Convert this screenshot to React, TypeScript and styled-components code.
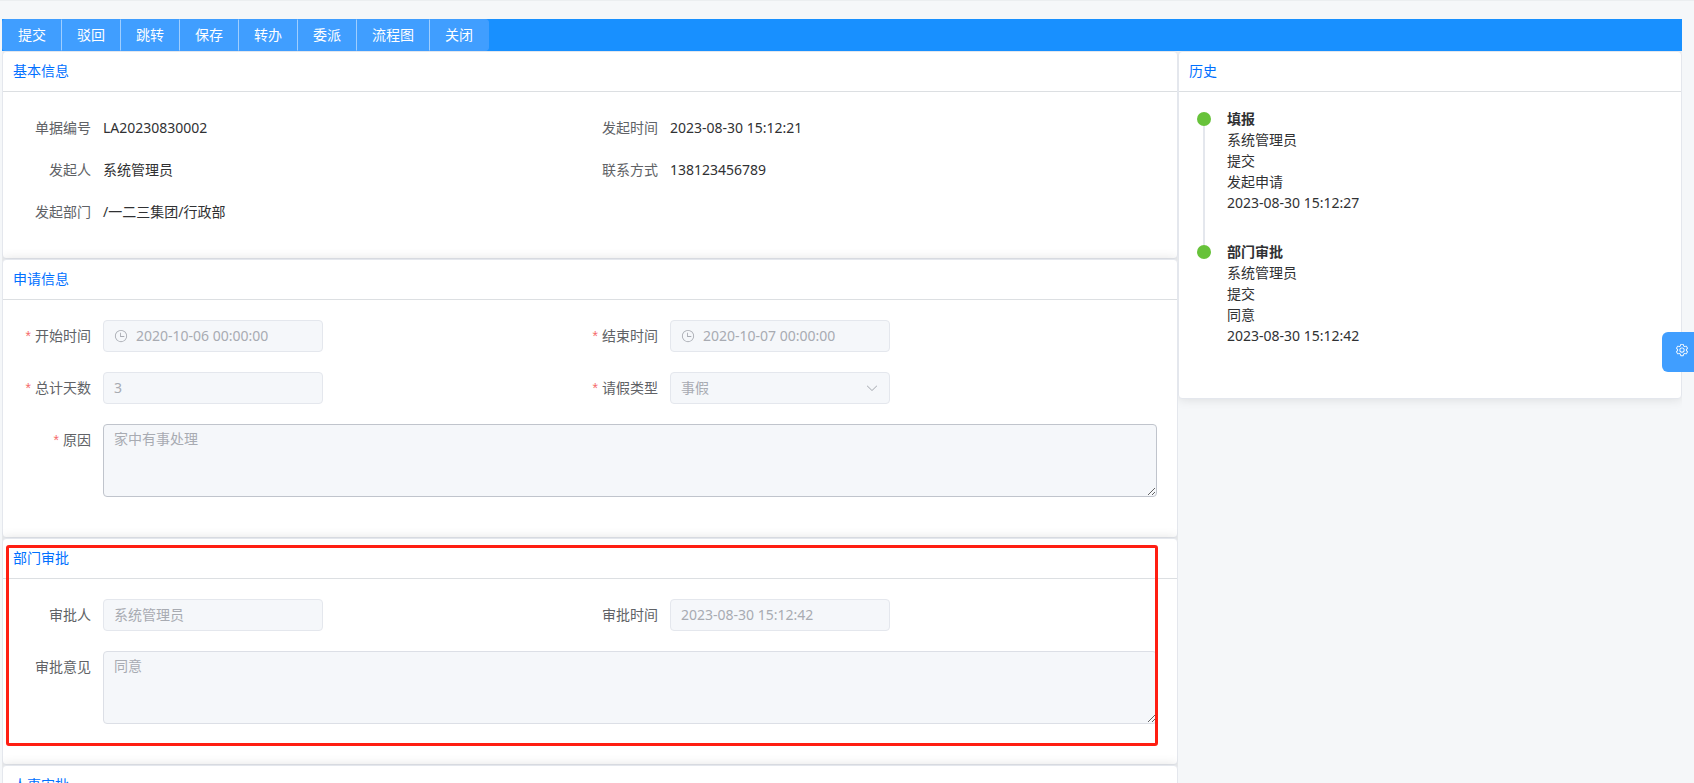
import React, { useId } from 'react';
import styled, { createGlobalStyle, css } from 'styled-components';

const GlobalStyle = createGlobalStyle`
  *, *::before, *::after { box-sizing: border-box; }
  body {
    margin: 0;
    background: #f5f7f9;
    color: #303133;
    font-family: "Noto Sans", "Noto Sans CJK SC", sans-serif;
    font-size: 14px;
    line-height: 21px;
  }
  button, input, select, textarea { font: inherit; margin: 0; }
`;

const Page = styled.div`
  height: 100vh;
  overflow: hidden;
  border-top: 1px solid #ebeef0;
  padding: 18px 12px 0 2px;
`;

const Toolbar = styled.div`
  display: flex;
  height: 32px;
  background: #1890ff;
`;

const ToolButton = styled.button`
  height: 32px;
  padding: 0 15px;
  border: 1px solid #409eff;
  border-right-color: #9fceff;
  background: #409eff;
  color: #fff;
  line-height: 30px;
  cursor: pointer;

  & + & {
    border-left: 0;
  }
  &:first-child {
    border-radius: 4px 0 0 4px;
  }
  &:last-child {
    border-right-color: #409eff;
    border-radius: 0 4px 4px 0;
  }
`;

const Columns = styled.main`
  display: grid;
  grid-template-columns: 7fr 3fr;
  align-items: start;
`;

const Column = styled.div`
  min-width: 0;
  overflow: hidden;
  padding-bottom: 20px;
`;

const CardBox = styled.section`
  position: relative;
  border: 1px solid #e4e7ed;
  border-radius: 4px;
  background: #fff;
  box-shadow: 0 0 12px rgba(0, 0, 0, 0.12);
`;

const CardTitle = styled.h2`
  height: 40px;
  margin: 0;
  padding: 0 10px;
  border-bottom: 1px solid #dcdfe2;
  color: #0070ff;
  font-size: 14px;
  font-weight: 400;
  line-height: 37px;
`;

const CardBody = styled.div`
  padding: 20px;
`;

const Highlight = styled.div`
  position: absolute;
  inset: 6px 19px 18px 3px;
  border: 3px solid #ff1e12;
  border-radius: 3px;
  pointer-events: none;
`;

const Grid = styled.div`
  display: grid;
  grid-template-columns: 1fr 1fr;
`;

const Item = styled.div<{ $wide?: boolean; $dense?: boolean }>`
  display: flex;
  align-items: flex-start;
  margin-bottom: ${(p) => (p.$dense ? 10 : 20)}px;
  ${(p) => p.$wide && css`grid-column: 1 / -1;`}
`;

const labelStyle = css`
  flex: none;
  width: 80px;
  padding-right: 12px;
  color: #606266;
  line-height: 32px;
  text-align: right;
  white-space: nowrap;
`;

const Term = styled.span`
  ${labelStyle}
`;

const Label = styled.label<{ $required?: boolean }>`
  ${labelStyle}
  ${(p) =>
    p.$required &&
    css`
      &::before {
        content: '*';
        margin-right: 4px;
        color: #f56c6c;
        font-family: "Liberation Sans", sans-serif;
      }
    `}
`;

const Value = styled.span`
  line-height: 32px;
`;

const disabledText = css`
  color: #a8abb2;
  -webkit-text-fill-color: #a8abb2;
  opacity: 1;
`;

const Control = styled.div`
  display: flex;
  align-items: center;
  gap: 8px;
  width: 220px;
  height: 32px;
  padding: 0 10px;
  border: 1px solid #e4e7ed;
  border-radius: 4px;
  background: #f5f7fa;
  color: #a8abb2;
`;

const TextInput = styled.input`
  flex: 1;
  min-width: 0;
  height: 30px;
  padding: 0 0 2px;
  border: 0;
  background: none;
  ${disabledText}
`;

const Select = styled.select`
  flex: 1;
  min-width: 0;
  height: 30px;
  padding: 0 0 2px;
  border: 0;
  background: none;
  appearance: none;
  ${disabledText}
`;

const TextArea = styled.textarea<{ $strong?: boolean }>`
  display: block;
  flex: 1;
  min-width: 0;
  height: 73px;
  padding: 3px 10px;
  border: 1px solid ${(p) => (p.$strong ? '#c0c4cc' : '#dcdfe6')};
  border-radius: 4px;
  background: #f5f7fa;
  line-height: 21px;
  resize: vertical;
  ${disabledText}
`;

const Glyph = styled.svg`
  flex: none;
  width: 14px;
  height: 14px;
  fill: currentColor;
`;

const Timeline = styled.ol`
  margin: 0;
  padding: 0;
  list-style: none;
`;

const Step = styled.li`
  display: flex;
  gap: 16px;
  height: 133px;
`;

const Rail = styled.div`
  display: flex;
  flex-direction: column;
  align-items: center;
  width: 14px;
  margin-left: -2px;

  &::before {
    content: '';
    flex: none;
    width: 14px;
    height: 14px;
    border-radius: 50%;
    background: #67c23a;
  }
  ${Step}:not(:last-child) > &::after {
    content: '';
    flex: 1;
    width: 2px;
    background: #e4e7ed;
  }
`;

const StepText = styled.div`
  display: flex;
  flex-direction: column;
  margin-top: -4px;
`;

const SettingsButton = styled.button`
  position: fixed;
  top: 332px;
  right: 0;
  width: 32px;
  height: 40px;
  padding: 0 0 4px 13px;
  border: 0;
  border-radius: 6px 0 0 6px;
  background: #409eff;
  color: #fff;
  display: flex;
  align-items: center;
  cursor: pointer;
`;

const ClockIcon = () => (
  <Glyph viewBox="0 0 1024 1024" aria-hidden="true">
    <path d="M512 896a384 384 0 1 0 0-768 384 384 0 0 0 0 768m0 64a448 448 0 1 1 0-896 448 448 0 0 1 0 896" />
    <path d="M480 256a32 32 0 0 1 32 32v256a32 32 0 0 1-64 0V288a32 32 0 0 1 32-32" />
    <path d="M480 512h256q32 0 32 32t-32 32H480q-32 0-32-32t32-32" />
  </Glyph>
);

const ArrowIcon = () => (
  <Glyph viewBox="0 0 1024 1024" aria-hidden="true">
    <path d="M831.872 340.864 512 652.672 192.128 340.864a30.592 30.592 0 0 0-42.752 0 29.12 29.12 0 0 0 0 41.6L489.664 714.24a32 32 0 0 0 44.672 0l340.288-331.712a29.12 29.12 0 0 0 0-41.728 30.592 30.592 0 0 0-42.752 0z" />
  </Glyph>
);

const GearIcon = () => (
  <Glyph viewBox="0 0 1024 1024" aria-hidden="true">
    <path d="M600.704 64a32 32 0 0 1 30.464 22.208l35.2 109.376c14.784 7.232 28.928 15.36 42.432 24.512l112.384-24.192a32 32 0 0 1 34.432 15.36L944.32 364.8a32 32 0 0 1-4.032 37.504l-77.12 85.12a357.12 357.12 0 0 1 0 49.024l77.12 85.248a32 32 0 0 1 4.032 37.504l-88.704 153.6a32 32 0 0 1-34.432 15.296L708.8 803.904c-13.44 9.088-27.648 17.28-42.368 24.512l-35.264 109.376A32 32 0 0 1 600.704 960H423.296a32 32 0 0 1-30.464-22.208L357.696 828.48a351.616 351.616 0 0 1-42.56-24.64l-112.32 24.256a32 32 0 0 1-34.432-15.36L79.68 659.2a32 32 0 0 1 4.032-37.504l77.12-85.248a357.12 357.12 0 0 1 0-48.896l-77.12-85.248A32 32 0 0 1 79.68 364.8l88.704-153.6a32 32 0 0 1 34.432-15.296l112.32 24.256c13.568-9.152 27.776-17.408 42.56-24.64l35.2-109.312A32 32 0 0 1 423.232 64H600.64zm-23.424 64H446.72l-36.352 113.088-24.512 11.968a294.113 294.113 0 0 0-34.816 20.096l-22.656 15.36-116.224-25.088-65.28 113.152 79.68 88.192-1.92 27.136a293.12 293.12 0 0 0 0 40.192l1.92 27.136-79.808 88.192 65.344 113.152 116.224-25.024 22.656 15.296a294.113 294.113 0 0 0 34.816 20.096l24.512 11.968L446.72 896h130.688l36.48-113.152 24.448-11.904a288.282 288.282 0 0 0 34.752-20.096l22.592-15.296 116.288 25.024 65.28-113.152-79.744-88.192 1.92-27.136a293.12 293.12 0 0 0 0-40.256l-1.92-27.136 79.808-88.128-65.344-113.152-116.288 24.96-22.592-15.232a287.616 287.616 0 0 0-34.752-20.096l-24.448-11.904L577.344 128zM512 320a192 192 0 1 1 0 384 192 192 0 0 1 0-384m0 64a128 128 0 1 0 0 256 128 128 0 0 0 0-256" />
  </Glyph>
);

type CardProps = { title: string; highlighted?: boolean; children?: React.ReactNode };

const Card = ({ title, highlighted, children }: CardProps) => (
  <CardBox>
    <CardTitle>{title}</CardTitle>
    <CardBody>{children}</CardBody>
    {highlighted && <Highlight />}
  </CardBox>
);

const Info = ({ label, value }: { label: string; value: string }) => (
  <Item $dense>
    <Term>{label}</Term>
    <Value>{value}</Value>
  </Item>
);

type FieldProps = {
  label: string;
  value: string;
  required?: boolean;
  kind?: 'text' | 'time' | 'select' | 'area';
};

const Field = ({ label, value, required, kind = 'text' }: FieldProps) => {
  const id = useId();
  return (
    <Item $wide={kind === 'area'}>
      <Label htmlFor={id} $required={required}>{label}</Label>
      {kind === 'area' ? (
        <TextArea id={id} defaultValue={value} $strong={required} disabled />
      ) : (
        <Control>
          {kind === 'time' && <ClockIcon />}
          {kind === 'select' ? (
            <>
              <Select id={id} defaultValue={value} disabled>
                <option>{value}</option>
              </Select>
              <ArrowIcon />
            </>
          ) : (
            <TextInput id={id} type="text" defaultValue={value} disabled />
          )}
        </Control>
      )}
    </Item>
  );
};

const actions = ['提交', '驳回', '跳转', '保存', '转办', '委派', '流程图', '关闭'];

const history = [
  { step: '填报', lines: ['系统管理员', '提交', '发起申请', '2023-08-30 15:12:27'] },
  { step: '部门审批', lines: ['系统管理员', '提交', '同意', '2023-08-30 15:12:42'] },
];

export default function App() {
  return (
    <Page>
      <GlobalStyle />
      <Toolbar>
        {actions.map((name) => (
          <ToolButton key={name} type="button">{name}</ToolButton>
        ))}
      </Toolbar>
      <Columns>
        <Column>
          <Card title="基本信息">
            <Grid>
              <Info label="单据编号" value="LA20230830002" />
              <Info label="发起时间" value="2023-08-30 15:12:21" />
              <Info label="发起人" value="系统管理员" />
              <Info label="联系方式" value="138123456789" />
              <Info label="发起部门" value="/一二三集团/行政部" />
            </Grid>
          </Card>
          <Card title="申请信息">
            <Grid>
              <Field label="开始时间" value="2020-10-06 00:00:00" kind="time" required />
              <Field label="结束时间" value="2020-10-07 00:00:00" kind="time" required />
              <Field label="总计天数" value="3" required />
              <Field label="请假类型" value="事假" kind="select" required />
              <Field label="原因" value="家中有事处理" kind="area" required />
            </Grid>
          </Card>
          <Card title="部门审批" highlighted>
            <Grid>
              <Field label="审批人" value="系统管理员" />
              <Field label="审批时间" value="2023-08-30 15:12:42" />
              <Field label="审批意见" value="同意" kind="area" />
            </Grid>
          </Card>
          <Card title="人事审批" />
        </Column>
        <Column>
          <Card title="历史">
            <Timeline>
              {history.map(({ step, lines }) => (
                <Step key={step}>
                  <Rail />
                  <StepText>
                    <strong>{step}</strong>
                    {lines.map((line) => (
                      <span key={line}>{line}</span>
                    ))}
                  </StepText>
                </Step>
              ))}
            </Timeline>
          </Card>
        </Column>
      </Columns>
      <SettingsButton type="button" aria-label="设置">
        <GearIcon />
      </SettingsButton>
    </Page>
  );
}
